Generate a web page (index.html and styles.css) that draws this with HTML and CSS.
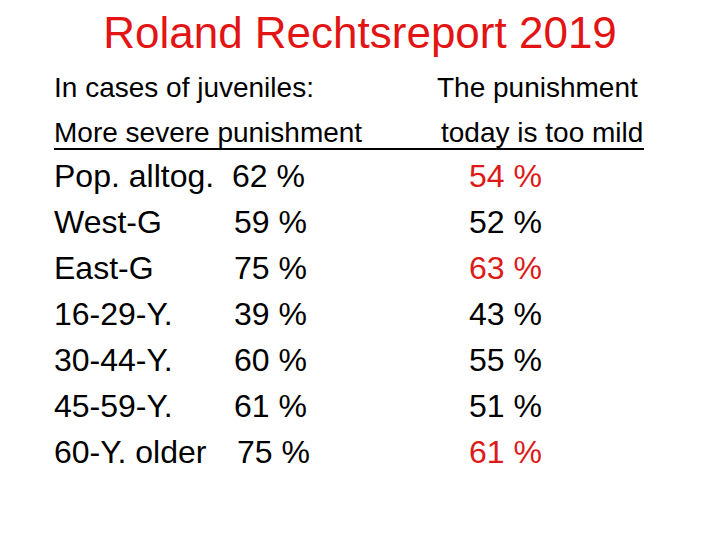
FILE: index.html
```html
<!DOCTYPE html>
<html lang="en">
<head>
<meta charset="utf-8">
<title>Roland Rechtsreport 2019</title>
<link rel="stylesheet" href="styles.css">
</head>
<body>
<div class="slide">
  <h1 class="title">Roland Rechtsreport 2019</h1>
  <div class="head">
    <div class="head-row">
      <span>In cases of juveniles:</span>
      <span>The punishment</span>
    </div>
    <div class="head-row underlined">
      <span>More severe punishment</span>
      <span class="shift">today is too mild</span>
    </div>
  </div>
  <div class="data">
    <div class="row"><span>Pop. alltog.</span><span>62 %</span><span class="red">54 %</span></div>
    <div class="row"><span>West-G</span><span class="o2">59 %</span><span>52 %</span></div>
    <div class="row"><span>East-G</span><span class="o2">75 %</span><span class="red">63 %</span></div>
    <div class="row"><span>16-29-Y.</span><span class="o2">39 %</span><span>43 %</span></div>
    <div class="row"><span>30-44-Y.</span><span class="o2">60 %</span><span>55 %</span></div>
    <div class="row"><span>45-59-Y.</span><span class="o2">61 %</span><span>51 %</span></div>
    <div class="row"><span>60-Y. older</span><span class="o5">75 %</span><span class="red">61 %</span></div>
  </div>
</div>
</body>
</html>
```
FILE: styles.css
```css
html, body {
  margin: 0;
  padding: 0;
  background: #ffffff;
}
body {
  width: 720px;
  height: 540px;
  overflow: hidden;
  font-family: "Liberation Sans", Arial, sans-serif;
  color: #000000;
}
.slide {
  padding-top: 8px;
}
.title {
  margin: 0;
  font-size: 44px;
  line-height: 50px;
  font-weight: normal;
  color: #e31414;
  text-align: center;
}
.head {
  margin-top: 7px;
  margin-left: 54px;
  width: 590px;
  font-size: 28px;
}
.head-row {
  display: grid;
  grid-template-columns: 383px auto;
  line-height: 45px;
}
.head-row.underlined {
  margin-top: 7px;
  line-height: 31px;
  border-bottom: 2px solid #000000;
}
.shift {
  padding-left: 4px;
}
.data {
  margin-top: 3px;
  margin-left: 54px;
  font-size: 32px;
}
.row {
  display: grid;
  grid-template-columns: 178px 237px auto;
  line-height: 46px;
}
.o2 {
  padding-left: 2px;
}
.o5 {
  padding-left: 5px;
}
.red {
  color: #dc1a1a;
}
```
